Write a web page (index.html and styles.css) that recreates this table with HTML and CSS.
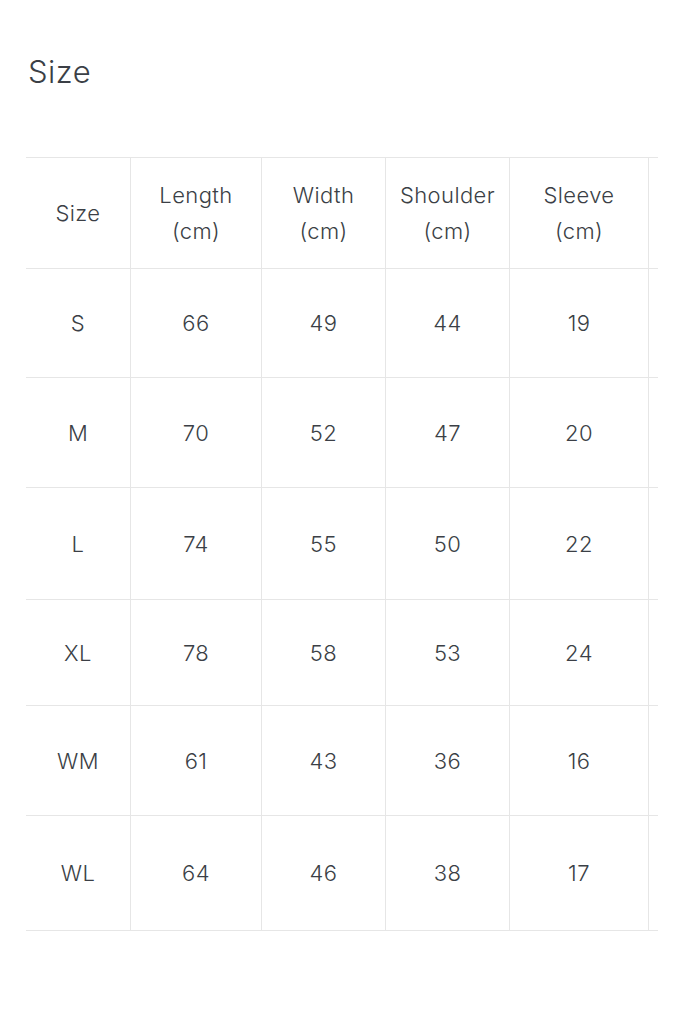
FILE: index.html
```html
<!DOCTYPE html>
<html lang="en">
<head>
<meta charset="utf-8">
<title>Size</title>
<link rel="stylesheet" href="styles.css">
</head>
<body>
<main class="page">
  <h1 class="title">Size</h1>
  <div class="chart">
    <div class="row head">
      <div class="cell">Size</div>
      <div class="cell">Length<br>(cm)</div>
      <div class="cell">Width<br>(cm)</div>
      <div class="cell">Shoulder<br>(cm)</div>
      <div class="cell">Sleeve<br>(cm)</div>
    </div>
    <div class="row r-s"><div class="cell">S</div><div class="cell">66</div><div class="cell">49</div><div class="cell">44</div><div class="cell">19</div></div>
    <div class="row r-m"><div class="cell">M</div><div class="cell">70</div><div class="cell">52</div><div class="cell">47</div><div class="cell">20</div></div>
    <div class="row r-l"><div class="cell">L</div><div class="cell">74</div><div class="cell">55</div><div class="cell">50</div><div class="cell">22</div></div>
    <div class="row r-xl"><div class="cell">XL</div><div class="cell">78</div><div class="cell">58</div><div class="cell">53</div><div class="cell">24</div></div>
    <div class="row r-wm"><div class="cell">WM</div><div class="cell">61</div><div class="cell">43</div><div class="cell">36</div><div class="cell">16</div></div>
    <div class="row r-wl"><div class="cell">WL</div><div class="cell">64</div><div class="cell">46</div><div class="cell">38</div><div class="cell">17</div></div>
  </div>
</main>
</body>
</html>
```

FILE: styles.css
```css
html, body {
  margin: 0;
  padding: 0;
  background: #ffffff;
}
body {
  font-family: Inter, Lato, "Liberation Sans", sans-serif;
  font-weight: 350;
  color: #3b3f46;
}
.page {
  padding: 52px 25px 0 26px;
}
.title {
  margin: 0 0 65px 2px;
  font-size: 31px;
  line-height: 40px;
  font-weight: 350;
  letter-spacing: 0.5px;
  color: #3b3f46;
}
.chart {
  width: 632px;
  border-top: 1px solid #e6e6e6;
}
.row {
  display: grid;
  grid-template-columns: 105px 131px 124px 124px 139px;
  height: 110px;
  border-bottom: 1px solid #e6e6e6;
  box-sizing: border-box;
}
.row.head { height: 111px; }
.row.r-s { height: 109px; }
.row.r-m { height: 110px; }
.row.r-l { height: 112px; }
.row.r-xl { height: 106px; }
.row.r-wm { height: 110px; }
.row.r-wl { height: 115px; }
.cell {
  display: flex;
  align-items: center;
  justify-content: center;
  text-align: center;
  font-size: 22px;
  line-height: 36px;
  letter-spacing: 0.4px;
  border-right: 1px solid #e6e6e6;
}
```
